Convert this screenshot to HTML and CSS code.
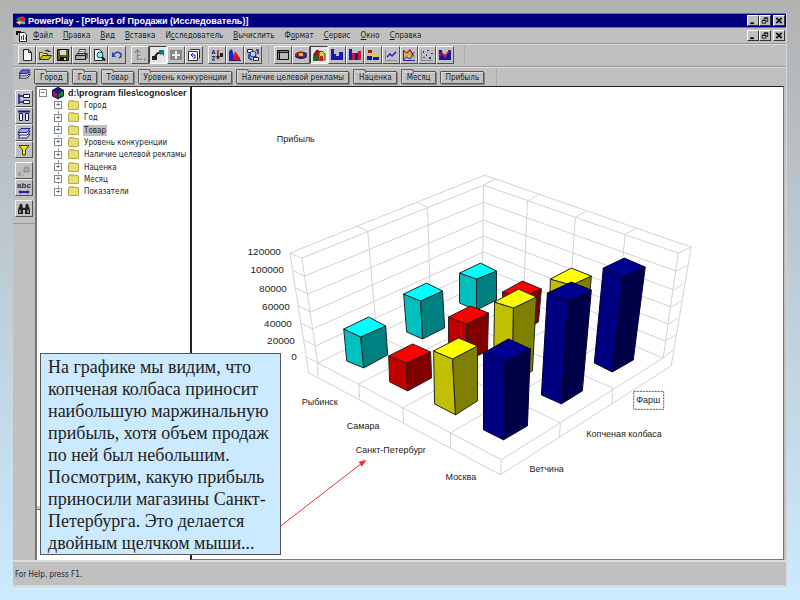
FILE: index.html
```html
<!DOCTYPE html>
<html lang="ru">
<head>
<meta charset="utf-8">
<title>PowerPlay</title>
<link rel="stylesheet" href="styles.css">
</head>
<body>
<div class="window">
  <header class="titlebar">
    <svg class="app-icon" viewBox="0 0 12 12"><path fill="#0a8a8a" d="M1 5l4-3 3 2-3 3z"/><path fill="#e02020" d="M5 3l3-2 3 2v5l-4 1z"/><path fill="#e8d020" d="M1 8l4-2 3 2-3 3z"/><path fill="#40c0e0" d="M7 7h4v3H7z"/></svg>
    <h1 class="title">PowerPlay - [PPlay1 of Продажи (Исследователь)]</h1>
    <div class="controls">
      <button class="ctl" aria-label="Свернуть"><svg viewBox="0 0 10 10"><path d="M2 7h4v2H2z"/></svg></button>
      <button class="ctl" aria-label="Восстановить"><svg viewBox="0 0 10 10"><path class="ln" d="M4 3.500V2h4v4H6.500M2 4.500h4v3.500H2zM4 2.500h4M2 5h4"/></svg></button>
      <button class="ctl close" aria-label="Закрыть"><svg viewBox="0 0 10 10"><path class="ln x" d="M2 2l6 6M8 2l-6 6"/></svg></button>
    </div>
  </header>

  <nav class="menubar">
    <svg class="doc-icon" viewBox="0 0 12 12"><path fill="#fff" stroke="#222" d="M3.500 2.500h5l2 2v7h-7z"/><path fill="#111" d="M0 1h5v2H2v2H0z"/><path fill="#a02020" d="M5 6h1v4H5z"/><path fill="#2020a0" d="M7 5h1v5H7z"/><path fill="#c09020" d="M9 7h1v3H9z"/></svg>
    <button><u>Ф</u>айл</button>
    <button><u>П</u>равка</button>
    <button><u>В</u>ид</button>
    <button><u>В</u>ставка</button>
    <button>И<u>с</u>следователь</button>
    <button><u>В</u>ычислить</button>
    <button>Ф<u>о</u>рмат</button>
    <button><u>С</u>ервис</button>
    <button><u>О</u>кно</button>
    <button><u>С</u>правка</button>
    <div class="controls">
      <button class="ctl" aria-label="Свернуть документ"><svg viewBox="0 0 10 10"><path d="M2 7h4v2H2z"/></svg></button>
      <button class="ctl" aria-label="Восстановить документ"><svg viewBox="0 0 10 10"><path class="ln" d="M4 3.500V2h4v4H6.500M2 4.500h4v3.500H2zM4 2.500h4M2 5h4"/></svg></button>
      <button class="ctl close" aria-label="Закрыть документ"><svg viewBox="0 0 10 10"><path class="ln x" d="M2 2l6 6M8 2l-6 6"/></svg></button>
    </div>
  </nav>

  <div class="toolbar">
    <div class="group">
      <button class="tool" aria-label="Создать"><svg viewBox="0 0 14 14"><path fill="#fff" stroke="#222" d="M3.500 1.500h5l3 3v8h-8z"/><path fill="none" stroke="#222" d="M8.500 1.500v3h3"/></svg></button>
      <button class="tool" aria-label="Открыть"><svg viewBox="0 0 14 14"><path fill="#e8e040" stroke="#555000" d="M1.500 11.500v-7h3l1 1h4v2"/><path fill="#c8c020" stroke="#333000" d="M1.500 11.500l3-4h9l-3 4z"/><path fill="none" stroke="#222" d="M7 3q2-2 4 0v1M9.500 3.500h3"/></svg></button>
      <button class="tool" aria-label="Сохранить"><svg viewBox="0 0 14 14"><path fill="#626200" stroke="#111" d="M1.500 1.500h11v11h-11z"/><path fill="#d8d8d8" d="M4 2h6v5H4z"/><path fill="#111" d="M4 9h7v3H4z"/><path fill="#ddd" d="M8 10h2v2H8z"/></svg></button>
      <button class="tool" aria-label="Печать"><svg viewBox="0 0 14 14"><path fill="#fff" stroke="#333" d="M4.500 5.500l1-4h6l-1 4"/><path fill="#aaa" stroke="#222" d="M1.500 7.500l2-2h9l-1 2zM1.500 7.500h10v4h-10zM11.500 7.500l1.500-2v4l-1.500 2"/><path fill="#ddd030" d="M8 9h2v1H8z"/><path stroke="#777" d="M6 3.500h4"/></svg></button>
      <button class="tool" aria-label="Просмотр"><svg viewBox="0 0 14 14"><path fill="#fff" stroke="#222" d="M2.500 1.500h5l3 3v8h-8z"/><circle cx="8" cy="7" r="3" fill="#90e8e8" stroke="#055"/><path stroke="#111" stroke-width="2" d="M10 9l3 3.500"/></svg></button>
      <button class="tool" aria-label="Отменить"><svg viewBox="0 0 14 14"><path fill="none" stroke="#3038b0" stroke-width="1.500" d="M3 7q3-4 7-2 3 3-1 5"/><path fill="#3038b0" d="M2 4v5h4z"/></svg></button>
    </div>
    <div class="group">
      <button class="tool" aria-label="Вверх" disabled><svg viewBox="0 0 14 14"><path fill="none" stroke="#fff" d="M5 3v9h5M3 5l2-2 2 2M5 8h3"/><path fill="none" stroke="#858585" stroke-width="1.500" d="M4.500 2.500v9h5M2 4.500l2.500-2.500L7 4.500M4.500 7.500h3M11 11.500h2"/></svg></button>
      <button class="tool pressed" aria-label="Исследователь"><svg viewBox="0 0 14 14"><path fill="#222" d="M1 8h5v4H1z"/><path fill="none" stroke="#222" stroke-width="2" d="M4 8l3-3h4"/><path fill="#087878" d="M8 2h5v6l-2-2-2 1-1-2z"/></svg></button>
      <button class="tool" aria-label="Добавить" disabled><svg viewBox="0 0 14 14"><path fill="#888" d="M1 2h12v10H1z"/><path stroke="#eee" stroke-width="2" d="M7 3v8M3 7h8"/></svg></button>
      <button class="tool" aria-label="Обновить"><svg viewBox="0 0 14 14"><path fill="#fff" stroke="#333" d="M3.500 1.500h9v9M1.500 3.500h9v9h-9z"/><path fill="none" stroke="#1818c0" d="M4 7h4v3M4 7l2-2M4 7l2 2M6 10h2"/></svg></button>
    </div>
    <div class="group">
      <button class="tool" aria-label="Сортировать"><svg viewBox="0 0 14 14"><path fill="none" stroke="#202070" d="M2 8.500h3L2 12h3M2 6l1.500-4L5 6M2.500 5h2"/><path stroke="#a01818" stroke-width="1.500" d="M8 2v7"/><path fill="#222" d="M6 8h4l-2 4zM10 5h3v4h-3z"/></svg></button>
      <button class="tool" aria-label="Ранжировать"><svg viewBox="0 0 14 14"><path fill="#2020d0" d="M1 12V3l3-2 3 11z"/><path fill="#d81818" d="M5 12l2-9 5 7v2z"/><path stroke="#301060" d="M1 12.500h12"/></svg></button>
      <button class="tool" aria-label="Найти"><svg viewBox="0 0 14 14"><path fill="#fff" stroke="#222" d="M1.500 1.500h5v3h-5zM7.500 9.500h5v3h-5z"/><circle cx="7" cy="6" r="3" fill="#a0d8e8" stroke="#182890"/><path fill="none" stroke="#182890" stroke-width="1.500" d="M3 6v4l3 2M10 2h2v4M9 8l2 2"/></svg></button>
    </div>
    <div class="group charts">
      <button class="tool" aria-label="Таблица"><svg viewBox="0 0 14 14"><path fill="#888" stroke="#111" d="M1.500 2.500h11v9h-11z"/><path fill="#bbb" d="M4 5h8v6H4z"/><path stroke="#111" d="M2 4.500h10M3.500 3v8"/></svg></button>
      <button class="tool" aria-label="Круговая"><svg viewBox="0 0 14 14"><ellipse cx="7" cy="8" rx="6" ry="3" fill="#181870"/><ellipse cx="7" cy="6.500" rx="6" ry="3" fill="#882030"/><ellipse cx="7" cy="6.500" rx="2.500" ry="1.500" fill="#e0c828"/><path fill="#2828a0" d="M9 5l2-1q2 1 2 3l-3 1z"/></svg></button>
      <button class="tool pressed" aria-label="Трёхмерная"><svg viewBox="0 0 14 14"><path fill="#b01818" stroke="#400" d="M2 6l3-4 3 2v8H2z"/><path fill="#e0d030" stroke="#440" d="M7 4l3-1 3 3v6H7z"/><path fill="#187028" d="M1 9l3-2 2 2v4H1z"/><path fill="#c02020" d="M8 8h3v5H8z"/></svg></button>
      <button class="tool" aria-label="Простая гистограмма"><svg viewBox="0 0 14 14"><path fill="#1818b8" d="M1 1h3v5h2v2h3V4h4v8H1z"/></svg></button>
      <button class="tool" aria-label="Групповая гистограмма"><svg viewBox="0 0 14 14"><path fill="#1818b8" d="M1 1h3v11H1zM7 5h3v7H7z"/><path fill="#c01830" d="M4 5h3v7H4zM10 3h3v9h-3z"/></svg></button>
      <button class="tool" aria-label="Составная гистограмма"><svg viewBox="0 0 14 14"><path fill="#b01818" d="M2 2h4v3H2z"/><path fill="#e8d028" d="M2 5h4v3H2zM8 6h4v3H8z"/><path fill="#1818a0" d="M1 8h5v4H1zM7 9h6v3H7z"/></svg></button>
      <button class="tool" aria-label="Линейная"><svg viewBox="0 0 14 14"><path fill="none" stroke="#888" d="M1.500 2v10.500H13"/><path fill="none" stroke="#2020d0" stroke-width="1.500" d="M3 9l3-3 2 2 4-4"/></svg></button>
      <button class="tool" aria-label="Несколько линий"><svg viewBox="0 0 14 14"><path fill="none" stroke="#c02020" stroke-width="1.500" d="M2 3l3 2 3-3 4 7"/><path fill="none" stroke="#d8a818" stroke-width="2" d="M2 10l5-5 5 5"/><path fill="none" stroke="#2828a8" d="M1 12l4-3 3 2 4-7M1.500 2v10.500H13"/></svg></button>
      <button class="tool" aria-label="Точечная"><svg viewBox="0 0 14 14"><path fill="none" stroke="#888" d="M1.500 2v10.500H13"/><path fill="#3030b8" d="M3 3h1v2H3zM7 2h2v1H7zM6 6h1v2H6zM11 5h2v1h-2zM3 9h2v1H3zM9 9h2v2H9z"/></svg></button>
      <button class="tool" aria-label="Комбинированная"><svg viewBox="0 0 14 14"><path fill="#1818a0" d="M1 2h3v3l3 2 3-3V2h3v10H1z"/><path fill="none" stroke="#c01840" stroke-width="1.500" d="M1 8l3-3 3 4 5-7"/></svg></button>
    </div>
  </div>

  <div class="tabs">
    <svg class="layers" viewBox="0 0 14 12"><path fill="#eef" stroke="#222" d="M1 10l3-4h9l-3 4z"/><path fill="#dde" stroke="#222280" d="M1 7.500l3-4h9l-3 4z"/><path fill="#6868d8" stroke="#222280" d="M1 5l3-4h9l-3 4z"/></svg>
    <button class="tab">Город</button>
    <button class="tab">Год</button>
    <button class="tab">Товар</button>
    <button class="tab">Уровень конкуренции</button>
    <button class="tab">Наличие целевой рекламы</button>
    <button class="tab">Наценка</button>
    <button class="tab">Месяц</button>
    <button class="tab plain">Прибыль</button>
    <i class="tabs-end"></i>
  </div>

  <main class="work">
    <aside class="side">
      <button class="tool" aria-label="Строки"><svg viewBox="0 0 14 14"><path fill="#fff" stroke="#181850" d="M6.500 2.500h6v3h-6zM6.500 8.500h6v3h-6z"/><path fill="none" stroke="#1818a0" stroke-width="1.500" d="M2 2v10M2 4h4M2 10h4"/></svg></button>
      <button class="tool" aria-label="Столбцы"><svg viewBox="0 0 14 14"><path fill="#fff" stroke="#181850" d="M2.500 4.500h3v7h-3zM8.500 4.500h3v7h-3z"/><path stroke="#1818a0" stroke-width="2" d="M1 2.500h12"/></svg></button>
      <button class="tool" aria-label="Слои"><svg viewBox="0 0 14 14"><path fill="#eef" stroke="#222260" d="M1 12l3-4h9l-3 4z"/><path fill="#fff" stroke="#222280" d="M1 9l3-4h9l-3 4z"/><path fill="#aaaaf0" stroke="#222280" d="M1 6.500l3-4h9l-3 4z"/></svg></button>
      <button class="tool" aria-label="Фильтр"><svg viewBox="0 0 14 14"><path fill="#e8e020" stroke="#444000" d="M2 2.500h10L8.500 7v5h-3V7z"/></svg></button>
      <button class="tool gap" aria-label="Формат чисел" disabled><svg viewBox="0 0 14 14"><path fill="none" stroke="#888" d="M1 8l3 4M4 8l-3 4M6 11h1M8 2v7M11 2v7M6 4h7M6 7h7"/></svg></button>
      <button class="tool" aria-label="Подписи"><svg viewBox="0 0 14 14"><text x="7" y="7" text-anchor="middle" class="abc">abc</text><path fill="#2020a8" d="M1 11l3-2v1h6V9l3 2-3 2v-1H4v1z"/></svg></button>
      <button class="tool find" aria-label="Поиск"><svg viewBox="0 0 14 14"><path fill="#222" d="M3 2h2l1 4h2l1-4h2l2 6v4H8V8H6v4H1V8z"/><path stroke="#ddd" d="M3 8v3M11 8v3"/></svg></button>
      <i class="side-end"></i>
    </aside>

    <section class="explorer">
      <ul class="tree">
        <li class="root"><span class="box">−</span><svg class="cube" viewBox="0 0 12 12"><path fill="#1818a8" d="M6 0l6 3-6 3-6-3z"/><path fill="#a01870" d="M0 3l6 3v6L0 9z"/><path fill="#108050" d="M12 3L6 6v6l6-3z"/><path fill="none" stroke="#101030" d="M6 .5l5.500 3v5.500L6 11.500.5 9V3.500zM6 6v5.500M.5 3.500L6 6l5.500-2.500"/></svg><b>d:\program files\cognos\cer</b></li>
        <li><span class="box">+</span><i class="folder"></i><span class="name">Город</span></li>
        <li><span class="box">+</span><i class="folder"></i><span class="name">Год</span></li>
        <li><span class="box">+</span><i class="folder"></i><span class="name selected">Товар</span></li>
        <li><span class="box">+</span><i class="folder"></i><span class="name">Уровень конкуренции</span></li>
        <li><span class="box">+</span><i class="folder"></i><span class="name">Наличие целевой рекламы</span></li>
        <li><span class="box">+</span><i class="folder"></i><span class="name">Наценка</span></li>
        <li><span class="box">+</span><i class="folder"></i><span class="name">Месяц</span></li>
        <li><span class="box">+</span><i class="folder"></i><span class="name">Показатели</span></li>
      </ul>
      <div class="lower-pane"></div>
    </section>

    <section class="chart">
      <svg viewBox="192 88 592 470" role="img" aria-label="Прибыль">
        <g class="grid">
          <path d="M290 253L485 175L692 247M302 258L484 185L679 253M290 253L302 258M357 226L368 231M417 202L428 207M484 185L495 179M528 201L540 194M576 217L587 211M626 234L637 228M679 253L692 247"/>
          <path d="M290 253L309 373M302 258L318 363V377M368 231L377 335M428 207L431 308M484 185L483 283M528 201L524 300M576 217L569 318M626 234L615 337M679 253L664 358M692 247L672 366"/>
          <path d="M292 270L305 276L484 202L677 271L689 265M296 288L308 294L484 220L675 290L685 283M299 306L311 312L484 236L672 307L682 301M301 323L313 329L484 252L669 324L679 318M304 340L316 346L484 268L666 341L676 335M307 357L318 363L483 283L664 358L674 350"/>
          <path d="M318 363L502 460L664 358M309 373L501 475L672 366M502 460L501 475M359 384L360 399M403 408L404 423M451 433V448M561 423L560 438M613 388V403M359 384L524 300M403 408L569 318M451 433L615 337M377 335L561 423M431 308L613 388"/>
        </g>
        <g class="cyan">
          <path class="l" d="M460 273L477 279V310L460 303z"/><path class="r" d="M477 279L497 271V300L477 310z"/><path class="t" d="M460 273L481 263L497 271L477 279z"/>
        </g>
        <g class="red">
          <path class="l" d="M503 292L522 297V332L504 325z"/><path class="r" d="M522 297L542 289L539 322L522 332z"/><path class="t" d="M503 292L523 281L542 289L522 297z"/>
        </g>
        <g class="yellow">
          <path class="l" d="M551 279L572 285L569 350L549 342z"/><path class="r" d="M572 285L592 276L587 338L569 350z"/><path class="t" d="M551 279L572 268L592 276L572 285z"/>
        </g>
        <g class="blue">
          <path class="l" d="M604 268L624 277L613 372L595 363z"/><path class="r" d="M624 277L646 267L634 360L613 372z"/><path class="t" d="M604 268L625 258L646 267L624 277z"/>
        </g>
        <g class="cyan">
          <path class="l" d="M404 294L421 301L423 339L407 332z"/><path class="r" d="M421 301L443 291L445 328L423 339z"/><path class="t" d="M404 294L427 283L443 291L421 301z"/>
        </g>
        <g class="red">
          <path class="l" d="M449 317L467 324V361L449 353z"/><path class="r" d="M467 324L489 313L488 351L467 361z"/><path class="t" d="M449 317L471 306L489 313L467 324z"/>
        </g>
        <g class="yellow">
          <path class="l" d="M495 302L514 308L513 382L494 373z"/><path class="r" d="M514 308L537 297L533 371L513 382z"/><path class="t" d="M495 302L519 289L537 297L514 308z"/>
        </g>
        <g class="blue">
          <path class="l" d="M548 293L569 301L562 404L542 395z"/><path class="r" d="M569 301L592 290L583 391L562 404z"/><path class="t" d="M548 293L572 282L592 290L569 301z"/>
        </g>
        <g class="cyan">
          <path class="l" d="M344 329L361 337L364 368L347 361z"/><path class="r" d="M361 337L386 326L388 355L364 368z"/><path class="t" d="M344 329L369 317L386 326L361 337z"/>
        </g>
        <g class="red">
          <path class="l" d="M389 356L407 363L408 391L390 382z"/><path class="r" d="M407 363L431 352L432 378L408 391z"/><path class="t" d="M389 356L413 344L431 352L407 363z"/>
        </g>
        <g class="yellow">
          <path class="l" d="M434 351L453 359L456 415L435 404z"/><path class="r" d="M453 359L478 346V401L456 415z"/><path class="t" d="M434 351L459 338L478 346L453 359z"/>
        </g>
        <g class="blue">
          <path class="l" d="M484 353L505 362L504 440L484 430z"/><path class="r" d="M505 362L531 349L528 426L504 440z"/><path class="t" d="M484 353L509 339L531 349L505 362z"/>
        </g>
        <g class="labels">
          <text x="277" y="142">Прибыль</text>
          <text x="302" y="405">Рыбинск</text>
          <text x="347" y="429">Самара</text>
          <text x="356" y="453">Санкт-Петербург</text>
          <text x="446" y="480">Москва</text>
          <text x="530" y="472">Ветчина</text>
          <text x="587" y="437">Копченая колбаса</text>
          <text x="637" y="403">Фарш</text>
        </g>
        <g class="labels scale">
          <text x="281" y="255">120000</text>
          <text x="284" y="273">100000</text>
          <text x="287" y="292">80000</text>
          <text x="290" y="310">60000</text>
          <text x="292" y="327">40000</text>
          <text x="295" y="344">20000</text>
          <text x="297" y="360">0</text>
        </g>
        <rect class="focus" x="634.500" y="391.500" width="30" height="18"/>
        <path class="arrow" d="M280 527L364 462"/>
        <path class="arrowhead" d="M367 460L362 467L359 462z"/>
      </svg>
    </section>
  </main>

  <footer class="status">For Help, press F1.</footer>

  <p class="callout">На графике мы видим, что копченая колбаса приносит наибольшую маржинальную прибыль, хотя объем продаж по ней был небольшим. Посмотрим, какую прибыль приносили магазины Санкт-Петербурга. Это делается двойным щелчком мыши...</p>
</div>
</body>
</html>
```

FILE: styles.css
```css
* { box-sizing: border-box; }

body {
  margin: 0;
  min-height: 100vh;
  padding: 13px;
  display: flex;
  background: linear-gradient(#b2b2b2, #cceaff);
  font-family: "DejaVu Sans Condensed", Roboto, sans-serif;
  font-size: 8px;
  color: #222;
}

button {
  font: inherit;
  color: inherit;
  margin: 0;
  padding: 0;
  border: 0;
  background: #c0c0c0;
}

svg { display: block; }

.window {
  position: relative;
  flex: 1;
  min-width: 0;
  display: flex;
  flex-direction: column;
  background: #c0c0c0;
  border-right: 1px solid #d4d8da;
}

.titlebar {
  display: flex;
  align-items: center;
  height: 15px;
  padding: 0 1px 0 2px;
  background: #000080;
  border: 1px solid #7070b0;
  border-width: 1px 0;
}

.app-icon { width: 11px; height: 11px; }

.title {
  margin: 0 0 0 2px;
  font-family: "Liberation Sans", sans-serif;
  font-size: 9px;
  line-height: 12px;
  font-weight: bold;
  color: #fff;
  white-space: nowrap;
}

.controls { display: flex; margin-left: auto; }

.ctl {
  width: 12px;
  height: 11px;
  border: 1px solid;
  border-color: #fff #333 #333 #fff;
}

.ctl svg { width: 10px; height: 9px; }
.ctl .ln { fill: none; stroke: #111; }
.ctl .x { stroke-width: 2; }
.ctl.close { margin-left: 2px; }

.menubar {
  display: flex;
  align-items: center;
  gap: 10px;
  height: 15px;
  padding: 0 1px 0 3px;
  white-space: nowrap;
}

.menubar .doc-icon { width: 12px; height: 12px; margin-right: -5px; }

.toolbar {
  display: flex;
  align-items: center;
  gap: 5px;
  height: 23px;
  padding-left: 5px;
  border-top: 1px solid #999;
  box-shadow: inset 0 1px #ddd;
}

.group { display: flex; }

.charts {
  margin-left: 1px;
  padding: 0 10px 0 5px;
  border: solid #aaa;
  border-width: 0 1px;
}

.tool {
  width: 18px;
  height: 18px;
  display: grid;
  place-items: center;
  border: 1px solid;
  border-color: #f4f4f4 #505050 #505050 #f4f4f4;
}

.tool svg { width: 14px; height: 14px; }
.tool.pressed { border-color: #404040 #fff #fff #404040; background: #e6e6e6; }

.tabs {
  display: flex;
  align-items: center;
  gap: 4px;
  height: 20px;
  padding-left: 5px;
  border-top: 1px solid #999;
  box-shadow: inset 0 1px #ddd;
  white-space: nowrap;
}

.layers { width: 13px; height: 11px; margin: 0 -1px 4px 0; }

.tab {
  position: relative;
  height: 13px;
  margin-top: 2px;
  padding: 0 4px 0 5px;
  line-height: 11px;
  border: 1px solid #555;
  border-radius: 1px;
  box-shadow: inset 1px 1px #ddd, 1px 1px #888;
}

.tab:not(.plain)::before {
  content: "";
  position: absolute;
  left: -1px;
  top: -3px;
  width: 11px;
  height: 3px;
  border: solid #666;
  border-width: 1px 1px 0 1px;
  border-radius: 1px 3px 0 0;
  background: #ccc;
}

.tabs-end { width: 1px; height: 18px; margin-left: 8px; background: #aaa; }

.work { flex: 1; min-height: 0; display: flex; }

.side { width: 22px; padding: 4px 2px 0; }
.side .tool { height: 17px; }
.side .gap, .side .find { margin-top: 4px; }
.side-end { display: block; height: 1px; margin: 6px -2px 0; background: #999; }
.abc { font-family: "Liberation Sans", sans-serif; font-size: 8px; font-weight: bold; fill: #333; }

.explorer {
  width: 155px;
  display: flex;
  flex-direction: column;
  border-left: 2px solid #777;
  background: #fff;
}

.tree {
  flex: 1;
  margin: 0;
  padding: 0;
  list-style: none;
  overflow: hidden;
  white-space: nowrap;
  display: grid;
  grid-template-rows: repeat(9, minmax(0, 1fr));
  max-height: 112px;
  border-top: 1px solid #444;
}

.tree li {
  position: relative;
  display: flex;
  align-items: center;
  padding-left: 17px;
}

.tree li:not(.root)::before {
  content: "";
  position: absolute;
  left: 21px;
  top: 0;
  bottom: 0;
  border-left: 1px dotted #999;
}

.tree li:last-child::before { bottom: 6px; }

.tree .root { padding-left: 2px; }
.root b { margin-left: 4px; font-family: "Liberation Sans", sans-serif; font-size: 9px; }

.box {
  position: relative;
  width: 8px;
  height: 8px;
  border: 1px solid #888;
  background: #fff;
  font-family: "Liberation Sans", sans-serif;
  font-size: 8px;
  line-height: 6px;
  text-align: center;
  flex: none;
}

.cube { width: 12px; height: 12px; margin-left: 5px; flex: none; }

.folder {
  position: relative;
  width: 11px;
  height: 9px;
  margin: 0 4px 0 6px;
  flex: none;
  background: #e6e070;
  border: 1px solid #b0aa50;
  border-radius: 1px;
}

.folder::before {
  content: "";
  position: absolute;
  left: 0;
  top: -2px;
  width: 5px;
  height: 2px;
  background: #c8c060;
}

.name { padding: 0 1px; line-height: 11px; }
.selected { background: #c0c0c0; }

.lower-pane {
  height: 51px;
  margin-top: auto;
  border-top: 1px solid #666;
  box-shadow: 0 -3px #ccc;
}

.chart {
  flex: 1;
  min-width: 0;
  margin-right: 2px;
  background: #fff;
  border: solid #222;
  border-width: 1px 1px 1px 2px;
  border-right-color: #777;
  border-bottom-color: #777;
}

.chart svg { width: 100%; height: 100%; }

.grid { fill: none; stroke: #d2d2d2; }

.cyan, .red, .yellow, .blue { stroke: #222; stroke-linejoin: round; }
.cyan .t { fill: #00ffff; }
.cyan .l { fill: #00c0c0; }
.cyan .r { fill: #008080; }
.red .t { fill: #ff0000; }
.red .l { fill: #c00000; }
.red .r { fill: #800000; }
.yellow .t { fill: #ffff00; }
.yellow .l { fill: #c0c000; }
.yellow .r { fill: #808000; }
.blue { stroke: #000030; }
.blue .t { fill: #000090; }
.blue .l { fill: #000080; }
.blue .r { fill: #000048; }

.labels { font-family: "Liberation Sans", sans-serif; font-size: 9px; fill: #222; }
.scale { font-size: 10px; text-anchor: end; }
.focus { fill: none; stroke: #555; stroke-dasharray: 2 1; }
.arrow { stroke: #f03030; }
.arrowhead { fill: #f03030; }

.status {
  height: 27px;
  padding: 0 2px;
  line-height: 25px;
  border-top: 2px solid #ddd;
  border-bottom: 2px solid #d4d8da;
}

.callout {
  position: absolute;
  left: 27px;
  top: 340px;
  width: 241px;
  margin: 0;
  padding: 2px 7px 0;
  border: 1px solid #555;
  background: #cceaff;
  font-family: "Liberation Serif", serif;
  font-size: 18px;
  line-height: 22px;
}
```
